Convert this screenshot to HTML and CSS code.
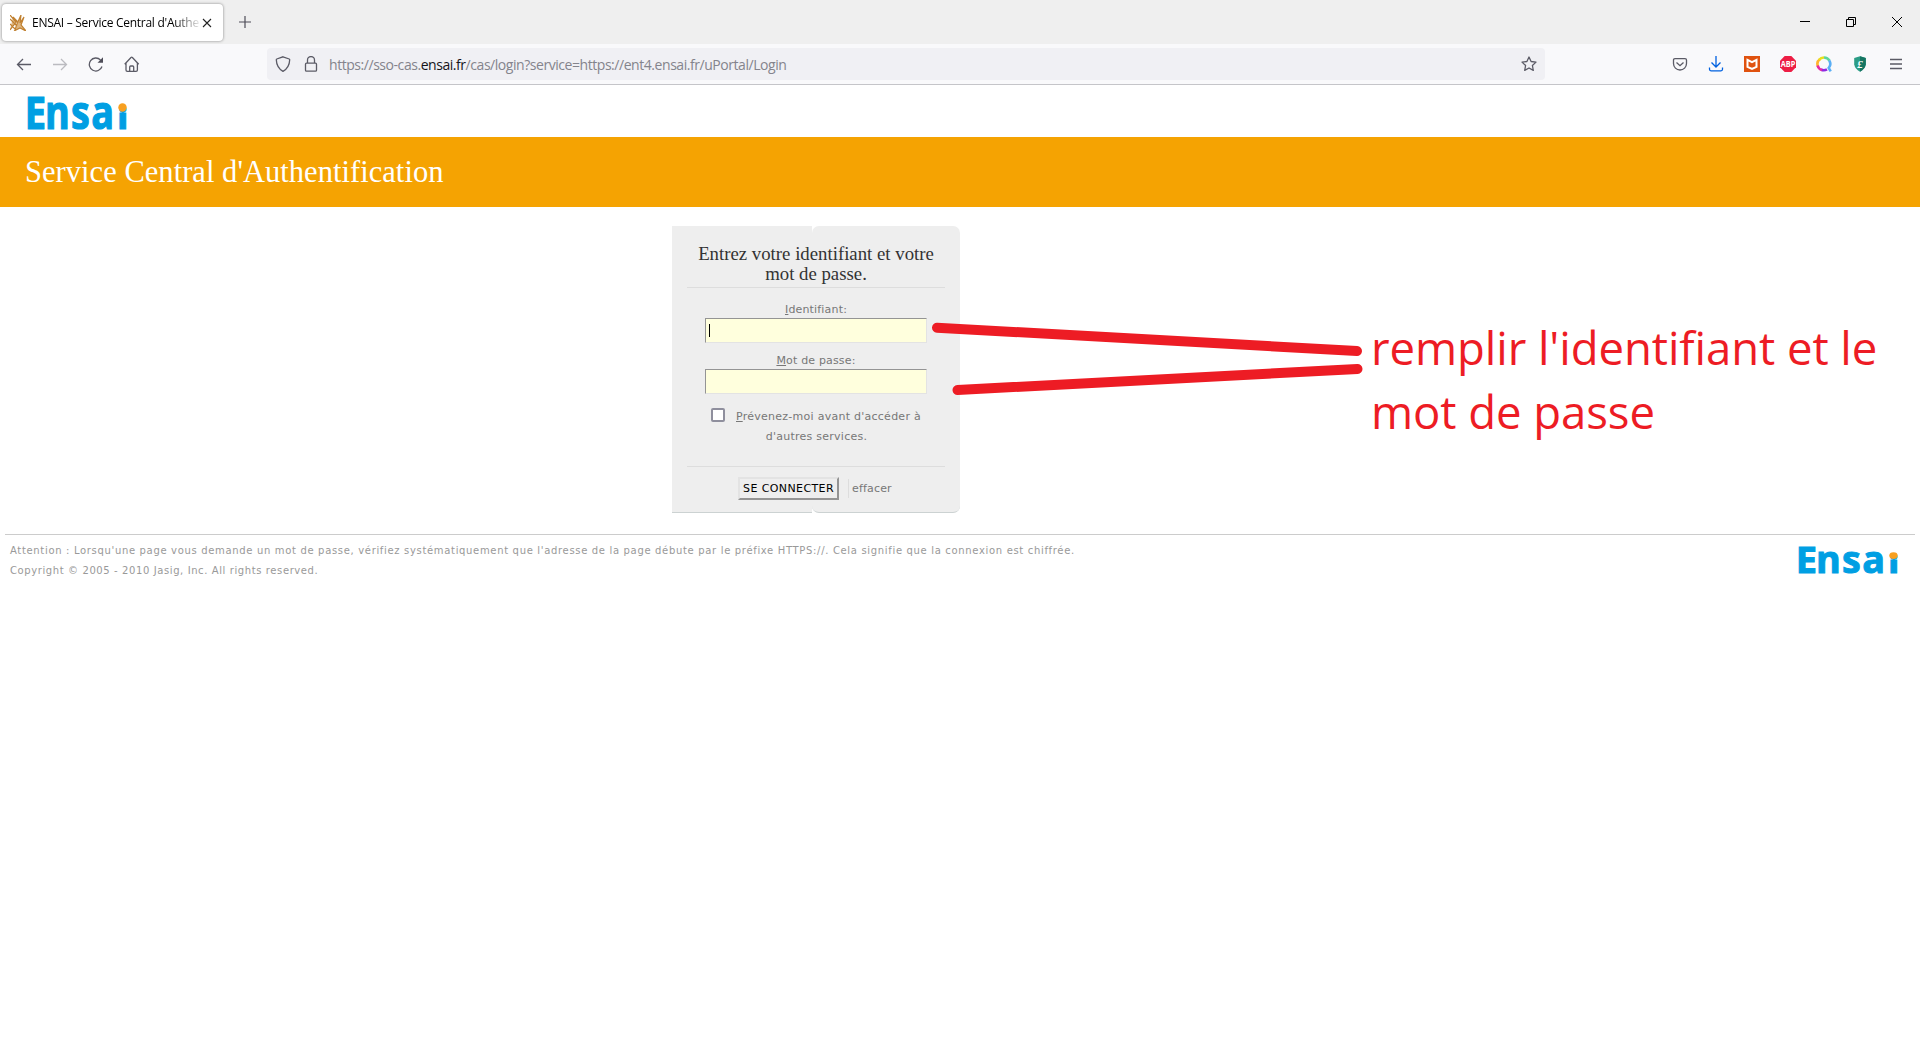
FILE: index.html
```html
<!DOCTYPE html>
<html lang="fr">
<head>
<meta charset="utf-8">
<title>ENSAI – Service Central d'Authentification</title>
<link rel="stylesheet" href="styles.css">
</head>
<body>
<header class="browser">
  <div class="tabs">
    <div class="tab">
      <svg class="favicon" width="16" height="16" viewBox="0 0 16 16"><path d="M0 0l6 7M0 4l7 7M0 9l6 6M0 15l7-9-4-4M5 15l2-6 4-9-1 8 4-6-3 8 5 6-6-3-6 3" fill="#c8862c" fill-opacity=".6" stroke="#c08030" stroke-width="1.2"/></svg>
      <span class="tab-title">ENSAI – Service Central d'Authentification</span>
      <svg class="close" width="10" height="10" viewBox="0 0 10 10"><path d="M1 1l8 8M9 1L1 9" stroke="#222" stroke-width="1.1"/></svg>
    </div>
    <svg class="newtab" width="12" height="12" viewBox="0 0 12 12"><path d="M6 0v12M0 6h12" stroke="#4e4d58" stroke-width="1.2"/></svg>
    <div class="window-controls">
      <svg width="10" height="12" viewBox="0 0 10 12"><path d="M0 5.5h10" stroke="#000"/></svg>
      <svg width="10" height="10" viewBox="0 0 10 10"><path d="M.5 2.5h7v7h-7zM2.500 2V.5h7v7H8" fill="none" stroke="#000"/></svg>
      <svg width="10" height="10" viewBox="0 0 10 10"><path d="M0 0l10 10M10 0L0 10" stroke="#000"/></svg>
    </div>
  </div>
  <div class="toolbar">
    <div class="nav">
      <svg width="16" height="16" viewBox="0 0 16 16"><path d="M15 8.500H1.500M7 3L1.500 8.500 7 14"/></svg>
      <svg class="disabled" width="16" height="16" viewBox="0 0 16 16"><path d="M1 8.500h13.500M9 3l5.500 5.500L9 14"/></svg>
      <svg width="16" height="16" viewBox="0 0 16 16"><path d="M14 10.500A6.500 6.500 0 1 1 12.500 4"/><path d="M15 1.300v5.500H9.500z" fill="#4e4d58" stroke="none"/></svg>
      <svg width="16" height="16" viewBox="0 0 16 16"><path d="M.7 8.300L7 1.500q.7-.6 1.400 0L14.700 8.300M2 7v7q0 1.300 1.300 1.300h8.800q1.300 0 1.300-1.300V7M5.700 15v-4q0-1 1-1h2q1 0 1 1v4"/></svg>
    </div>
    <div class="urlbar">
      <svg width="16" height="16" viewBox="0 0 16 16"><path d="M8 .8L14.200 3q.5.200.5.800-.3 8-6.700 11.600Q1.600 11.800 1.300 3.800q0-.6.5-.8z"/></svg>
      <svg width="16" height="16" viewBox="0 0 16 16"><path d="M4.500 7V4a3.500 3.500 0 0 1 7 0v3M3.500 7.200h9q1 0 1 1v6q0 1-1 1h-9q-1 0-1-1v-6q0-1 1-1z"/></svg>
      <span class="url">https://sso-cas.<b>ensai.fr</b>/cas/login?service=https://ent4.ensai.fr/uPortal/Login</span>
      <svg class="star" width="16" height="16" viewBox="0 0 16 16"><path d="M8 1l2.100 4.500 4.900.6-3.600 3.400.9 4.900L8 12l-4.300 2.400.9-4.900L1 6.100l4.900-.6z" stroke-linejoin="round"/></svg>
    </div>
    <div class="extensions">
      <svg width="16" height="16" viewBox="0 0 16 16"><path d="M3 2.600h10q1.500 0 1.500 1.500v3.400a6.500 6.500 0 0 1-13 0V4.100q0-1.500 1.500-1.500zM4.500 6.500L8 9.700l3.500-3.200"/></svg>
      <svg class="download" width="16" height="16" viewBox="0 0 16 16"><path d="M8 0v11M3.500 6.500L8 11l4.500-4.500M1.500 11.500v1.800q0 1.500 1.500 1.500h10q1.500 0 1.500-1.500v-1.800"/></svg>
      <svg width="16" height="16" viewBox="0 0 16 16"><path d="M0 0h16v16H0z" fill="#e0520f" stroke="none"/><path d="M3.500 3.800L8 6.200l4.500-2.400v7L8 13l-4.500-2.200z" stroke="#fff" stroke-width="2"/></svg>
      <svg width="16" height="16" viewBox="0 0 16 16"><path d="M4.700 0h6.600L16 4.700v6.600L11.300 16H4.700L0 11.300V4.700z" fill="#ed1e45" stroke="none"/><text class="abp" x="8" y="11" textLength="14.500" lengthAdjust="spacingAndGlyphs">ABP</text></svg>
      <svg width="16" height="16" viewBox="0 0 16 16"><g stroke-width="2.600"><path d="M2 10.500A6.300 6.300 0 0 1 4 3" stroke="#ffb52c"/><path d="M3 4a6.300 6.300 0 0 1 5-2.500" stroke="#e9df1d"/><path d="M8 1.500a6.300 6.300 0 0 1 5.500 3.200" stroke="#5ed69c"/><path d="M13.200 4.500a6.300 6.300 0 0 1-.5 7.500l2 3.300" stroke="#5aaef5"/><path d="M11 13.300A6.300 6.300 0 0 1 5 13.500" stroke="#8f2be0"/><path d="M6 14a6.300 6.300 0 0 1-4.400-4.500" stroke="#e52aa4"/></g></svg>
      <svg width="16" height="16" viewBox="0 0 16 16"><path d="M8 .3L13.800 2v6.500Q13 13 8 15.700 3 13 2.200 8.500V2z" fill="#2b9c85" stroke="none"/><path d="M8 .3L13.800 2v6.500Q13 13 8 15.700z" fill="#167562" stroke="none"/><text class="pound" x="8" y="12">£</text></svg>
      <svg width="16" height="16" viewBox="0 0 16 16"><path d="M2 3.500h12M2 8h12M2 12.500h12"/></svg>
    </div>
  </div>
</header>

<main>
  <div class="brand">
    <svg class="logo" width="100" height="33" viewBox="0 0 100 33" preserveAspectRatio="none" role="img"><g id="ensai"><g transform="scale(.82 1)"><text x="-2.800" y="32" font-size="44" textLength="26" lengthAdjust="spacingAndGlyphs">E</text><text x="22" y="32" font-size="46" letter-spacing="1.600">nsa</text></g><text class="logo-i" x="95.700" y="32" font-size="29">i</text><circle cx="95.500" cy="10.500" r="4.200" fill="#f7a021" stroke="none"/></g></svg>
  </div>
  <h1>Service Central d'Authentification</h1>

  <form class="login">
    <h2>Entrez votre identifiant et votre<br>mot de passe.</h2>
    <div class="field"><label><u>I</u>dentifiant:</label><div class="input"><i class="caret"></i></div></div>
    <div class="field"><label><u>M</u>ot de passe:</label><div class="input"></div></div>
    <div class="warn"><span class="checkbox"></span><label><u>P</u>révenez-moi avant d'accéder à<br><span class="second">d'autres services.</span></label></div>
    <div class="actions"><button type="button">SE CONNECTER</button><a class="reset">effacer</a></div>
  </form>

  <footer>
    <p>Attention : Lorsqu'une page vous demande un mot de passe, vérifiez systématiquement que l'adresse de la page débute par le préfixe HTTPS://. Cela signifie que la connexion est chiffrée.<br><span class="copyright">Copyright © 2005 - 2010 Jasig, Inc. All rights reserved.</span></p>
    <svg class="logo" width="100" height="27" viewBox="0 0 100 33" preserveAspectRatio="none" role="img"><use href="#ensai"/></svg>
  </footer>
</main>

<div class="notes">
  <svg width="440" height="90" viewBox="930 310 440 90"><path d="M937 327.700L1357 351M957.500 390L1357.500 369"/></svg>
  <p>remplir l'identifiant et le<br>mot de passe</p>
</div>
</body>
</html>
```
FILE: styles.css
```css
* { box-sizing: border-box; }
body { margin: 0; background: #fff; font-family: "DejaVu Sans", sans-serif; }
h1, h2, p { margin: 0; font-weight: normal; }
svg { display: block; flex: none; }

.browser { height: 85px; font-family: "Open Sans", sans-serif; border-bottom: 1px solid #c5c5c9; }
.tabs { display: flex; align-items: center; height: 44px; background: #efefef; }
.tab { display: flex; align-items: center; width: 221px; height: 37px; margin: 1px 0 0 2px; padding: 0 11px 0 8px; background: #fff; border-radius: 4px; box-shadow: 0 0 3px rgba(0, 0, 0, .45); }
.tab-title { flex: 1; margin-left: 6px; overflow: hidden; white-space: nowrap; font-size: 12px; letter-spacing: -.27px; color: #000; -webkit-mask-image: linear-gradient(90deg, #000 84%, transparent 101%); mask-image: linear-gradient(90deg, #000 84%, transparent 101%); }
.close { margin-left: 2px; }
.newtab { margin-left: 16px; }
.window-controls { display: flex; align-items: center; gap: 36px; margin: 0 18px 0 auto; }
.toolbar { display: flex; align-items: center; height: 40px; background: #f9f9fb; }
.toolbar svg { fill: none; stroke: #5b5b66; stroke-width: 1.3; }
.nav { display: flex; gap: 20px; padding-left: 16px; width: 267px; }
.toolbar .disabled { stroke: #bbbbc0; }
.urlbar { display: flex; align-items: center; gap: 12px; width: 1278px; height: 32px; padding: 0 8px; background: #f0f0f4; border-radius: 4px; }
.url { margin-left: -2px; font-size: 14px; letter-spacing: -.45px; color: #84848c; white-space: nowrap; }
.url b { font-weight: normal; color: #15141a; }
.star { margin-left: auto; }
.extensions { display: flex; gap: 20px; margin: 0 16px 0 auto; }
.toolbar .download { stroke: #0061e0; }
.toolbar .abp { font: bold 8px "Open Sans", sans-serif; text-anchor: middle; fill: #fff; stroke: none; }
.toolbar .pound { font: italic bold 11px "Liberation Serif", serif; text-anchor: middle; fill: #fff; stroke: none; }

.brand { height: 52px; padding: 12px 0 0 27px; }
.logo { overflow: visible; font-family: "Open Sans", sans-serif; font-weight: 700; fill: #009fe3; stroke: #009fe3; stroke-width: 1.2; }
.logo-i { font-weight: 800; text-anchor: middle; }
h1 { height: 70px; padding-left: 25px; background: #f5a302; color: #fff; font: 30.5px/70px "Liberation Serif", serif; letter-spacing: .04px; white-space: nowrap; }

.login { position: relative; z-index: 0; width: 288px; height: 287px; margin: 19px 0 0 35%; padding: 18px 15px 0; background: linear-gradient(#eee, #eee) 0 0 / 140px 286px no-repeat, linear-gradient(#ccd2d2, #ccd2d2) 0 100% / 140px 1px no-repeat; color: #777; font-size: 11px; letter-spacing: .17px; text-align: center; }
.login::before { content: ""; position: absolute; z-index: -1; inset: 0 0 0 140px; background: #eee; border-bottom: 1px solid #ccd2d2; border-radius: 7px; }
h2 { height: 44px; border-bottom: 1px solid #ddd; color: #333; font: 18.8px/20px "Liberation Serif", serif; letter-spacing: 0; white-space: nowrap; }
.field { display: flex; flex-direction: column; align-items: center; height: 51px; }
h2 + .field { margin-top: 14px; }
.field label { height: 16px; line-height: 16px; }
.input { width: 222px; height: 25px; padding: 5px 0 0 3px; background: #ffffdd; border: 1px solid; border-color: #949494 #e3e3e3 #e3e3e3 #949494; }
.caret { display: block; width: 1px; height: 13px; background: #000; }
.warn { display: flex; gap: 11px; height: 62px; padding-left: 24px; letter-spacing: .26px; line-height: 20px; white-space: nowrap; }
.warn label { padding-top: 3px; }
.checkbox { flex: none; width: 14px; height: 14px; margin-top: 4px; background: #fff; border: 2px solid #8f8f9d; border-radius: 2px; }
.second { margin-left: -24px; }
.actions { display: flex; height: 47px; padding: 10px 0 0 51px; border-top: 1px solid #ddd; }
button { width: 101px; height: 23px; padding: 0; background: #eee; border: 2px solid; border-color: #e3e3e3 #949494 #949494 #e3e3e3; color: #000; font: 11px "DejaVu Sans", sans-serif; letter-spacing: .4px; white-space: nowrap; }
.reset { height: 19px; margin: 2px 0 0 9px; padding-left: 3px; border-left: 1px solid #ddd; line-height: 20px; }

footer { display: flex; justify-content: space-between; margin: 21px 5px 0; padding: 6px 17px 0 5px; border-top: 1px solid #ccc; color: #999; font-size: 10px; letter-spacing: .67px; line-height: 20px; white-space: nowrap; }
.copyright { letter-spacing: .6px; }
footer .logo { margin-top: 6px; letter-spacing: 0; }

.notes svg { position: absolute; left: 930px; top: 310px; fill: none; stroke: #ed1c24; stroke-width: 10; stroke-linecap: round; }
.notes p { position: absolute; left: 1371px; top: 315px; color: #ed1c24; font: 45.5px/64px "Open Sans", sans-serif; letter-spacing: -.07px; white-space: nowrap; }
```
